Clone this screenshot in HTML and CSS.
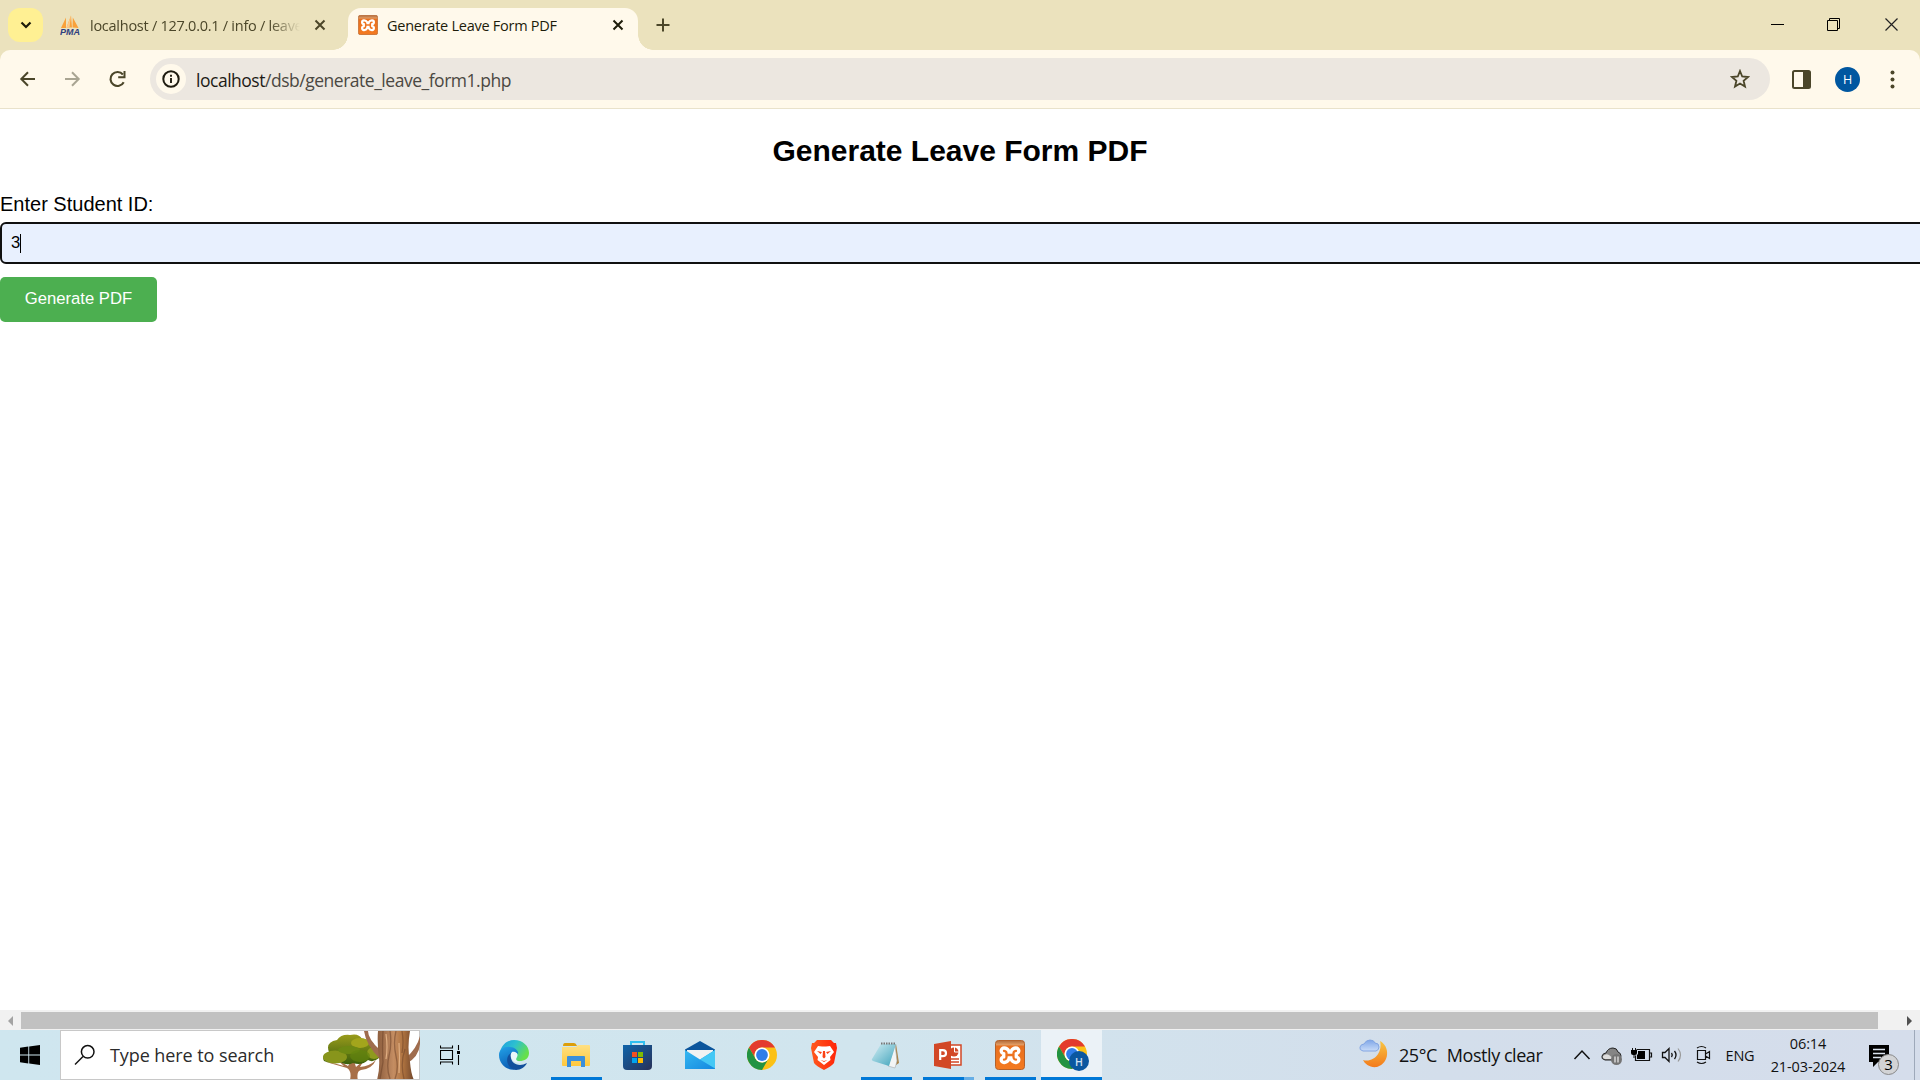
FILE: index.html
```html
<!DOCTYPE html>
<html lang="en">
<head>
<meta charset="utf-8">
<title>Generate Leave Form PDF</title>
<link rel="stylesheet" href="styles.css">
</head>
<body>
<svg width="0" height="0" class="defs" aria-hidden="true">
  <defs>
    <linearGradient id="orange" x1="0" y1="0" x2="0" y2="1"><stop offset="0" stop-color="#b06a3a"/><stop offset=".14" stop-color="#e09a62"/><stop offset=".2" stop-color="#e8701f"/><stop offset="1" stop-color="#f47a20"/></linearGradient>
    <linearGradient id="edgeTop" x1="0" y1="0" x2="1" y2=".5"><stop offset="0" stop-color="#1b9de2"/><stop offset=".5" stop-color="#2dc0cf"/><stop offset="1" stop-color="#66e04a"/></linearGradient>
    <linearGradient id="edgeMid" x1="0" y1="0" x2=".4" y2="1"><stop offset="0" stop-color="#23a3e8"/><stop offset="1" stop-color="#0a5cb4"/></linearGradient>
    <linearGradient id="folder" x1="0" y1="0" x2="0" y2="1"><stop offset="0" stop-color="#ffe083"/><stop offset="1" stop-color="#ffc83d"/></linearGradient>
    <linearGradient id="store" x1="0" y1="0" x2="1" y2="1"><stop offset="0" stop-color="#0f64aa"/><stop offset="1" stop-color="#293158"/></linearGradient>
    <linearGradient id="mail" x1="0" y1="0" x2="1" y2="1"><stop offset="0" stop-color="#35b8f1"/><stop offset="1" stop-color="#1488e0"/></linearGradient>
    <linearGradient id="brave" x1="0" y1="0" x2="1" y2="0"><stop offset="0" stop-color="#ff5a1f"/><stop offset="1" stop-color="#ff2408"/></linearGradient>
    <linearGradient id="note" x1="0" y1="0" x2="1" y2="1"><stop offset="0" stop-color="#d3eef4"/><stop offset="1" stop-color="#3fa3bb"/></linearGradient>
    <linearGradient id="moon" x1="0" y1="0" x2="0" y2="1"><stop offset="0" stop-color="#f8c543"/><stop offset="1" stop-color="#f37a1b"/></linearGradient>
    <linearGradient id="cloud" x1="0" y1="0" x2="0" y2="1"><stop offset="0" stop-color="#7fa6e8"/><stop offset="1" stop-color="#c9dcf8"/></linearGradient>
    <linearGradient id="leaf" x1="0" y1="0" x2="0" y2="1"><stop offset="0" stop-color="#9a9c1c"/><stop offset="1" stop-color="#3c5f0c"/></linearGradient>
    <linearGradient id="bark" x1="0" y1="0" x2="1" y2="0"><stop offset="0" stop-color="#8b5c3d"/><stop offset=".45" stop-color="#c48d62"/><stop offset=".7" stop-color="#b07440"/><stop offset="1" stop-color="#70452a"/></linearGradient>
    <symbol id="xampp" viewBox="0 0 30 30">
      <rect x=".5" y=".5" width="29" height="29" rx="3" fill="url(#orange)" stroke="#b4622c"/>
      <g fill="none" stroke-linecap="round" stroke-linejoin="round">
        <path id="xampp-bones" d="M9 10.800Q12 11 11.500 15 12 19.500 9 19.700M21 10.800Q18 11 18.500 15 18 19.500 21 19.700M11.500 15h7" stroke="#fff" stroke-width="9"/>
        <path d="M9 10.800Q12 11 11.500 15 12 19.500 9 19.700M21 10.800Q18 11 18.500 15 18 19.500 21 19.700M11.500 15h7" stroke="#ee7420" stroke-width="2.300"/>
      </g>
    </symbol>
    <symbol id="chrome" viewBox="0 0 30 30">
      <circle cx="15" cy="15" r="15" fill="#fbc116"/>
      <path d="M2 7.500A15 15 0 0 1 28 7.500H15A7.500 7.500 0 0 0 8.500 18.750z" fill="#e33b2e"/>
      <path d="M2 7.500A15 15 0 0 0 15 30L21.500 18.750A7.500 7.500 0 0 1 8.500 18.750z" fill="#229342"/>
      <circle cx="15" cy="15" r="7.500" fill="#fff"/><circle cx="15" cy="15" r="5.900" fill="#2f7de9"/>
    </symbol>
  </defs>
</svg>

<header class="tabstrip">
  <button class="tab-search" aria-label="Search tabs"><svg width="12" height="8" viewBox="0 0 12 8"><path d="M1.500 1.500 6 6l4.500-4.500" fill="none" stroke="#1d1c0a" stroke-width="2.200"/></svg></button>
  <div class="tab tab-idle">
    <svg width="20" height="20" viewBox="0 0 20 20"><path d="M1 13 6 2.500v10.500zM6.500 12.500 11 .5l1 12zM12.500 12.500l.3-10 5.700 10.500z" fill="#f9a13a"/><path d="M6.500 12.500 11 .5 9.500 12.500z" fill="#fbc98a"/><text x="0" y="19.500" textLength="20" lengthAdjust="spacingAndGlyphs" class="pma">PMA</text></svg>
    <span class="tab-title fade">localhost / 127.0.0.1 / info / leave</span>
    <svg class="close" width="12" height="12" viewBox="0 0 12 12"><path d="m1.500 1.500 9 9m0-9-9 9" stroke="#4b4629" stroke-width="2"/></svg>
  </div>
  <div class="tab tab-active">
    <svg width="20" height="20"><use href="#xampp"/></svg>
    <span class="tab-title">Generate Leave Form PDF</span>
    <svg class="close" width="12" height="12" viewBox="0 0 12 12"><path d="m1.500 1.500 9 9m0-9-9 9" stroke="#1d1c0a" stroke-width="2"/></svg>
  </div>
  <svg class="newtab" width="14" height="14" viewBox="0 0 14 14"><path d="M7 .5v13M.5 7h13" stroke="#4b4629" stroke-width="2"/></svg>
  <div class="window-controls">
    <svg width="57" height="49" viewBox="0 0 57 49"><path d="M22 24.500h13" stroke="#000"/></svg>
    <svg width="57" height="49" viewBox="0 0 57 49"><path d="M21.500 20.500h10v10h-10zM23.500 20.500v-2h10v10h-2" fill="none" stroke="#000"/></svg>
    <svg width="57" height="49" viewBox="0 0 57 49"><path d="m22.500 18.500 12 12m0-12-12 12" stroke="#222" stroke-width="1.200"/></svg>
  </div>
</header>

<nav class="toolbar">
  <svg class="nav-icon" width="45" height="40" viewBox="0 0 45 40"><path d="M35 20H22M28 13.300 21.300 20 28 26.700" fill="none" stroke="#4b4629" stroke-width="2"/></svg>
  <svg class="nav-icon" width="45" height="40" viewBox="0 0 45 40"><path d="M20 20h13M27 13.300 33.700 20 27 26.700" fill="none" stroke="#a9a592" stroke-width="2"/></svg>
  <svg class="nav-icon" width="45" height="40" viewBox="0 0 45 40"><path d="M33.700 23.200a7 7 0 1 1-.8-7.700" fill="none" stroke="#4b4629" stroke-width="2.100"/><path d="M35.500 12v7.300h-7.300v-2h5.300V12z" fill="#4b4629"/></svg>
  <div class="omnibox">
    <span class="site-info"><svg width="18" height="18" viewBox="0 0 18 18"><circle cx="9" cy="9" r="7.700" fill="none" stroke="#1f1c10" stroke-width="2"/><path d="M9 8v5M9 4.800v2" stroke="#1f1c10" stroke-width="1.900"/></svg></span>
    <span class="url"><b>localhost</b>/dsb/generate_leave_form1.php</span>
    <svg class="star" width="20" height="20" viewBox="0 0 20 20"><path d="m10 2 2.200 5.500 5.900.5-4.500 3.800 1.400 5.800-5-3.100-5 3.100 1.400-5.800L1.900 8l5.900-.5z" fill="none" stroke="#4b4629" stroke-width="1.800"/></svg>
  </div>
  <svg class="panel-icon" width="19" height="19" viewBox="0 0 19 19"><rect x="1" y="1" width="17" height="17" rx="1.500" fill="none" stroke="#4b4629" stroke-width="2"/><path d="M11 1h7v17h-7z" fill="#4b4629"/></svg>
  <span class="avatar">H</span>
  <svg class="menu-icon" width="5" height="19" viewBox="0 0 5 19"><g fill="#4b4629"><circle cx="2.500" cy="2.500" r="2"/><circle cx="2.500" cy="9.500" r="2"/><circle cx="2.500" cy="16.500" r="2"/></g></svg>
</nav>

<main class="page">
  <h2>Generate Leave Form PDF</h2>
  <form class="leave-form">
    <label>Enter Student ID:</label>
    <div class="field"><span>3</span><i class="caret"></i></div>
    <button type="button" class="submit">Generate PDF</button>
  </form>
</main>

<div class="scrollbar">
  <svg width="21" height="20" viewBox="0 0 21 20"><path d="M13 6v10l-5-5z" fill="#a3a3a3"/></svg>
  <div class="thumb"></div>
  <svg width="42" height="20" viewBox="0 0 42 20"><path d="M29 6v10l5-5z" fill="#505050"/></svg>
</div>

<footer class="taskbar">
  <div class="start"><svg width="20" height="20" viewBox="0 0 20 20"><path d="M0 2.800 8.300 1.600V9.500H0zM9.200 1.500 20 0v9.500H9.200zM0 10.500h8.300v7.900L0 17.200zM9.200 10.500H20V20L9.200 18.500z"/></svg></div>
  <div class="search">
    <svg width="22" height="22" viewBox="0 0 22 22"><circle cx="13.700" cy="7.800" r="6.300" fill="none" stroke="#111" stroke-width="1.500"/><path d="M9 12.500 1 20.500" stroke="#111" stroke-width="1.500"/></svg>
    <span>Type here to search</span>
    <svg class="trees" width="97" height="48" viewBox="0 0 97 48">
      <path d="M27 49q2-9-3-12L3 31q9 1 18 4L13 28l12 7 5-8 3 9 8-7-4 7q10-1 16-7-4 9-15 10-5 1-3 11z" fill="#a76f48"/>
      <path d="M1 30q-3-6 5-9Q2 11 14 9q4-6 13-5 9-2 12 4 12 0 13 9 7 3 4 10-6 5-11 2-6 6-15 3-6 3-13-1-11 2-16-1z" fill="url(#leaf)"/>
      <ellipse cx="37" cy="12" rx="9" ry="5" fill="#a3a51c"/><ellipse cx="12" cy="26" rx="12" ry="6.500" fill="#88951b"/><ellipse cx="26" cy="19" rx="11" ry="4" fill="#6e8913"/><ellipse cx="51" cy="22" rx="7" ry="6" fill="#8f9a1e"/><ellipse cx="37" cy="25" rx="10" ry="6" fill="#62840e" opacity=".7"/>
      <path d="M41 0h4q0 8 12 19v9Q43 14 41 0zM97 5q-3 12-14 22v6q13-7 14-20z" fill="#9f6c4d"/>
      <path d="M55 0h32q-3 17 0 31 1 12 4 18H54q3-11 2-23-2-14-1-26z" fill="url(#bark)"/>
      <path d="M60 0q-1 17 0 31l-3 17M67 0q2 13-1 25t1 23M73 0q-3 12 0 25t-1 23M79 0q2 11 0 22M82 18q-5 14-1 30" fill="none" stroke="#6a4028" stroke-width="1.300" opacity=".5"/>
      <path d="M63 3q2 14 0 25M76 12q1 14 0 30" fill="none" stroke="#e0af83" stroke-width="1.200"/>
    </svg>
  </div>
  <div class="task-view"><svg width="22" height="20" viewBox="0 0 22 20"><path d="M.5 5.500h12v9H.5zM.5.500v2.500h12V.500M.5 19.500v-2.500h12v2.500M18.500 0v5M18.500 10v10" fill="none" stroke="#000" stroke-width="1.100"/><path d="M17 6h3v3h-3z"/></svg></div>
  <div class="app"><svg width="30" height="30" viewBox="0 0 30 30"><path d="M1 12C3 4 9 0 15 0c9 0 15 6 15 13 0 6-5 8-9 8-3 0-5-1-4-3 3-4 0-8-5-8-5 0-9 1-11 2z" fill="url(#edgeTop)"/><path d="M0 15c0-6 6-9 11-8 5 0 9 4 8 7-3-3-8-1-8 4 0 6 5 10 10 10-10 5-21-2-21-13z" fill="url(#edgeMid)"/><path d="M12 13c-7 4-4 16 5 17 5 0 9-3 11-7-9 5-18 0-16-10z" fill="#124f9c"/><path d="M13 12c3-1 7 2 5 5-2 3 0 5 4 5-7 3-13-6-9-10z" fill="#eaf6fa"/></svg></div>
  <div class="app running"><svg width="28" height="26" viewBox="0 0 28 26"><path d="M1 4q0-3 2-3h9q2 0 3 3z" fill="#dd9e09"/><path d="M0 5h14l2-2h11q1 0 1 1v19q0 1-1 1H1q-1 0-1-1z" fill="url(#folder)"/><path d="M5 25V15q0-1 1-1h16q1 0 1 1v10h-4v-6H9v6z" fill="#3b8fdb"/></svg></div>
  <div class="app"><svg class="nudge" width="30" height="30" viewBox="0 0 30 30"><path d="M9 6V2h13v4" fill="none" stroke="#30bff0" stroke-width="2"/><path d="M1 5h29v21q0 4-4 4H5q-4 0-4-4z" fill="url(#store)"/><path d="M10 12h5v5h-5z" fill="#f25022"/><path d="M16 12h5v5h-5z" fill="#7fba00"/><path d="M10 18h5v5h-5z" fill="#00a4ef"/><path d="M16 18h5v5h-5z" fill="#ffb900"/></svg></div>
  <div class="app"><svg width="30" height="28" viewBox="0 0 30 28"><path d="M0 8.500 15 0l15 8.500V14H0z" fill="#0b559c"/><path d="M2 9h26v10H2z" fill="#f2f2f2"/><path d="M0 9l15 9.500L30 9v19H0z" fill="url(#mail)"/><path d="M15 18.500 30 9v18.500z" fill="#45c8f5"/></svg></div>
  <div class="app"><svg width="30" height="30"><use href="#chrome"/></svg></div>
  <div class="app"><svg width="26" height="30" viewBox="0 0 26 30"><path d="M6 0h14l3 3h2l1 5-3 15q-2 3-10 7-8-4-10-7L0 8l1-5h2z" fill="url(#brave)"/><path d="m7 6 4 .5h4L19 6l4 6-4 5 .5 3-6.500 5-6.500-5L7 17l-4-5z" fill="#fff"/><path d="m6 11 5 1-1.500 2zM20 11l-5 1 1.500 2zM12 11h2l.5 6-1.500 1.500-1.500-1.500zM9.500 20l3.500 1 3.500-1-3.500 2z" fill="#fb4215"/></svg></div>
  <div class="app running"><svg width="30" height="28" viewBox="0 0 30 28"><path d="m25 3 3 19-3 2-3-18z" fill="#aa8245"/><path d="m24 3-7 22 7 2 2-7z" fill="#f3f5f5" stroke="#a5aaad" stroke-width=".6"/><path d="M10 3h15l-7 22-16-5q-2-1-1-2z" fill="url(#note)"/><path d="M10 2.500h15" stroke="#777" stroke-width="2.200" stroke-dasharray="1.500 1"/></svg></div>
  <div class="app running stacked"><svg width="28" height="28" viewBox="0 0 28 28"><path d="M15 4h12v20H15z" fill="#fff" stroke="#d24726" stroke-width="1.500"/><path d="M17 18h8M17 21h8" stroke="#d24726" stroke-width="1.500"/><circle cx="20" cy="11" r="4.500" fill="#d24726"/><path d="M20.500 6v5h5" fill="none" stroke="#fff"/><path d="m0 3 17-3v28L0 25z" fill="#d24726"/><path d="M6.200 19V9.200h2.500q3.300 0 3.300 3T8.700 15.200H6.200" fill="none" stroke="#fff" stroke-width="2.200"/></svg></div>
  <div class="app running"><svg width="30" height="30"><use href="#xampp"/></svg></div>
  <div class="app running current"><svg class="profile-app" width="32" height="32" viewBox="0 0 32 32"><svg width="30" height="30"><use href="#chrome"/></svg><circle cx="22" cy="22" r="10" fill="#0b57a0"/><text x="22" y="26.500" text-anchor="middle" class="badge-letter">H</text></svg></div>

  <div class="tray">
    <svg width="49" height="50" viewBox="0 0 49 50"><path d="M30 11c10 5 10 22-3 26-7 1-12-3-14-7 11 3 20-8 17-19z" fill="url(#moon)"/><path d="M13 21q-4-1-3-4 1-3 4-3 2-4 6-4 4 0 5 3 4 0 4 4 0 3-3 4z" fill="url(#cloud)" stroke="#83a6e3"/></svg>
    <div class="weather"><span class="temp">25°C</span><span>Mostly clear</span></div>
    <svg width="36" height="50" viewBox="0 0 36 50"><path d="m10.500 29 7.500-8 7.500 8" fill="none" stroke="#111" stroke-width="1.500"/></svg>
    <svg width="26" height="50" viewBox="0 0 26 50"><path d="M5 30q-4-1-3-4 1-3 4-3 2-5 7-5 4 0 5 4 3 1 3 4 0 4-4 4z" fill="#858585" stroke="#222"/><path d="M5 29q-3-1-2-3 3-3 6-1l5 4z" fill="#ddd"/><circle cx="16.500" cy="29.500" r="5.500" fill="#747474"/><path d="M15 26.500v6M18 26.500v6" stroke="#eee" stroke-width="1.200"/></svg>
    <svg width="32" height="50" viewBox="0 0 32 50"><path d="M10.500 19.500h13v11h-14v-5M24 23h1.500v4H24" fill="none" stroke="#111" stroke-width="1.200"/><path d="M12 21h7v8h-8v-4l1-1zM5 20h6v3q0 2-2 2H7q-2 0-2-2z"/><path d="M6.500 18v2M9.500 18v2M8 25v3" stroke="#111"/></svg>
    <svg width="28" height="50" viewBox="0 0 28 50"><path d="M4.500 22.500h2.500l4-4v13l-4-4H4.500z" fill="none" stroke="#111" stroke-width="1.300"/><path d="M13.500 23q1.500 2 0 4M16.500 21q3 4 0 8" fill="none" stroke="#111" stroke-width="1.300"/><path d="M20 18.500q5 6.500 0 13" fill="none" stroke="#999" stroke-width="1.200"/></svg>
    <svg width="34" height="50" viewBox="0 0 34 50"><path d="M11.500 20.500h8v9h-8zM19.500 24l4-2.500v7l-4-2.500M11 18q4.500-3 9 0M11 32q4.500 3 9 0" fill="none" stroke="#111" stroke-width="1.200"/></svg>
    <span class="lang">ENG</span>
    <div class="clock"><span class="time">06:14</span><span class="date">21-03-2024</span></div>
    <svg width="58" height="50" viewBox="0 0 58 50"><path d="M13 15h20v17H22l-5 5v-5h-4z"/><path d="M17 19.500h12M17 23.500h12M17 27.500h8" stroke="#dbe3ee" stroke-width="1.300"/><circle cx="32.500" cy="34.500" r="10" fill="#d2d3d5" stroke="#888"/><text x="32.500" y="40" text-anchor="middle" class="count">3</text></svg>
    <i class="show-desktop"></i>
  </div>
</footer>
</body>
</html>
```
FILE: styles.css
```css
* { box-sizing: border-box; }
body {
  margin: 0;
  width: 1920px;
  height: 1080px;
  overflow: hidden;
  display: flex;
  flex-direction: column;
  background: linear-gradient(#ebe2bd 70px, #fff 70px);
  font-family: "Open Sans", "Noto Sans", sans-serif;
  color: #111;
}
.defs { position: absolute; }
svg { display: block; flex: none; }
button { border: 0; padding: 0; }

.tabstrip {
  height: 50px;
  flex: none;
  display: flex;
  background: #ebe2bd;
}
.tab-search {
  width: 35px;
  height: 34px;
  margin: 8px 0 0 8px;
  border-radius: 12px;
  background: #fff093;
  display: grid;
  place-items: center;
}
.tab {
  height: 42px;
  margin-top: 8px;
  display: flex;
  align-items: center;
  padding-bottom: 8px;
}
.tab-idle { width: 305px; padding-left: 17px; color: #4b4629; }
.tab-title {
  font-size: 14.500px;
  letter-spacing: -.26px;
  white-space: nowrap;
  overflow: hidden;
  margin-left: 9px;
  padding-top: 2px;
  line-height: 24px;
}
.tab-idle .tab-title { width: 210px; margin-left: 10px; }
.fade { mask-image: linear-gradient(90deg, #000 180px, transparent 210px); }
.close { margin-left: auto; }
.tab-idle .close { margin-right: 22px; }
.tab-active {
  position: relative;
  width: 290px;
  padding-left: 10px;
  border-radius: 13px 13px 0 0;
  background: #fff9eb;
  color: #1d1c0a;
}
.tab-active::before,
.tab-active::after {
  content: "";
  position: absolute;
  bottom: 0;
  width: 15px;
  height: 15px;
}
.tab-active::before { left: -15px; background: radial-gradient(circle at 0 0, transparent 14.500px, #fff9eb 15px); }
.tab-active::after { right: -15px; background: radial-gradient(circle at 100% 0, transparent 14.500px, #fff9eb 15px); }
.tab-active .close { margin-right: 14px; }
.newtab { margin: 18px 0 0 18px; }
.window-controls { display: flex; margin-left: auto; }

.toolbar {
  height: 59px;
  flex: none;
  display: flex;
  align-items: center;
  background: #fff9eb;
  border-bottom: 1px solid #e9e2cb;
  border-radius: 10px 10px 0 0;
}
.omnibox {
  width: 1620px;
  height: 42px;
  margin-left: 15px;
  border-radius: 21px;
  background: #ece7e0;
  display: flex;
  align-items: center;
}
.site-info {
  width: 30px;
  height: 30px;
  margin-left: 6px;
  border-radius: 50%;
  background: #fff9eb;
  display: grid;
  place-items: center;
}
.url {
  margin-left: 10px;
  padding-top: 1px;
  font-size: 17.500px;
  letter-spacing: -.48px;
  color: #4b4842;
}
.url b { font-weight: 400; color: #1d1b16; }
.star { margin: 0 20px 0 auto; }
.panel-icon { margin-left: 22px; }
.avatar {
  width: 25px;
  height: 25px;
  margin-left: 24px;
  border-radius: 50%;
  background: #0057a0;
  color: #fff;
  font-size: 12.500px;
  line-height: 25px;
  text-align: center;
}
.menu-icon { margin-left: 30px; }

.page {
  flex: 1;
  background: #fff;
  font-family: "Liberation Sans", Arial, sans-serif;
  color: #000;
  overflow: hidden;
}
.page h2 {
  margin: 25px 0 0;
  font-size: 30px;
  line-height: 34px;
  text-align: center;
}
.leave-form { display: flex; flex-direction: column; align-items: flex-start; }
.leave-form label { margin-top: 25px; font-size: 20px; line-height: 23px; }
.field {
  width: 1946px;
  height: 42px;
  margin-top: 6px;
  padding-left: 9px;
  border: 2px solid #101010;
  border-radius: 6px;
  background: #e8f0fe;
  display: flex;
  align-items: center;
  font-size: 16.670px;
  line-height: 20px;
}
.field span { margin-bottom: 1px; }
.caret { width: 1px; height: 19px; background: #000; }
.submit {
  width: 157px;
  height: 45px;
  margin-top: 13px;
  padding-bottom: 1px;
  border-radius: 5px;
  background: #4caf50;
  color: #fff;
  font: 16.670px "Liberation Sans", Arial, sans-serif;
}

.scrollbar { height: 20px; flex: none; display: flex; background: #f1f1f1; }
.thumb { flex: 1; margin: 2px 0 1px; background: #c1c1c1; }

.taskbar {
  height: 50px;
  flex: none;
  display: flex;
  background: linear-gradient(90deg, #cfe6ef, #d1e5ee 45%, #d3deeb 75%, #d5ddeb);
}
.start { width: 60px; display: grid; place-items: center; }
.search {
  width: 360px;
  padding-left: 13px;
  border: 1px solid #c8c8c8;
  background: #fff;
  display: flex;
  align-items: center;
  font-size: 18px;
  letter-spacing: -.08px;
  color: #2b2b2b;
}
.search span { margin-left: 14px; white-space: nowrap; }
.trees { margin: 0 -1px 0 auto; }
.task-view { width: 63px; padding-right: 2px; display: grid; place-items: center; }
.app {
  width: 62px;
  display: grid;
  place-items: center;
  background: linear-gradient(#0078d7, #0078d7) center bottom / 0 3px no-repeat;
}
.nudge { margin-right: 2px; }
.profile-app { margin-left: 2px; }
.running { background-size: 51px 3px; }
.stacked {
  background: linear-gradient(90deg, #0078d7 41px, #66aee6 41px) center bottom / 51px 3px no-repeat;
}
.current { width: 61px; background-color: #ebf2f7; background-size: 61px 3px; }
.pma { font: italic 700 8.500px "Liberation Sans", sans-serif; fill: #2f3f7f; }
.badge-letter { font: 600 10.500px "Open Sans", sans-serif; fill: #cfe0f2; }

.tray {
  width: 570px;
  margin-left: auto;
  display: grid;
  grid-template-columns: 49px 165px 36px 26px 32px 28px 34px 40px 96px 58px 6px;
  align-items: center;
}
.weather { display: flex; gap: 10px; font-size: 18px; letter-spacing: -.45px; white-space: nowrap; }
.lang { font-size: 14.500px; letter-spacing: -.2px; text-align: center; }
.clock { display: flex; flex-direction: column; align-items: center; font-size: 14.500px; line-height: 23px; letter-spacing: -.1px; }
.count { font: 15px "Open Sans", sans-serif; }
.show-desktop { height: 50px; border-left: 1px solid #9ea9ba; }
```
